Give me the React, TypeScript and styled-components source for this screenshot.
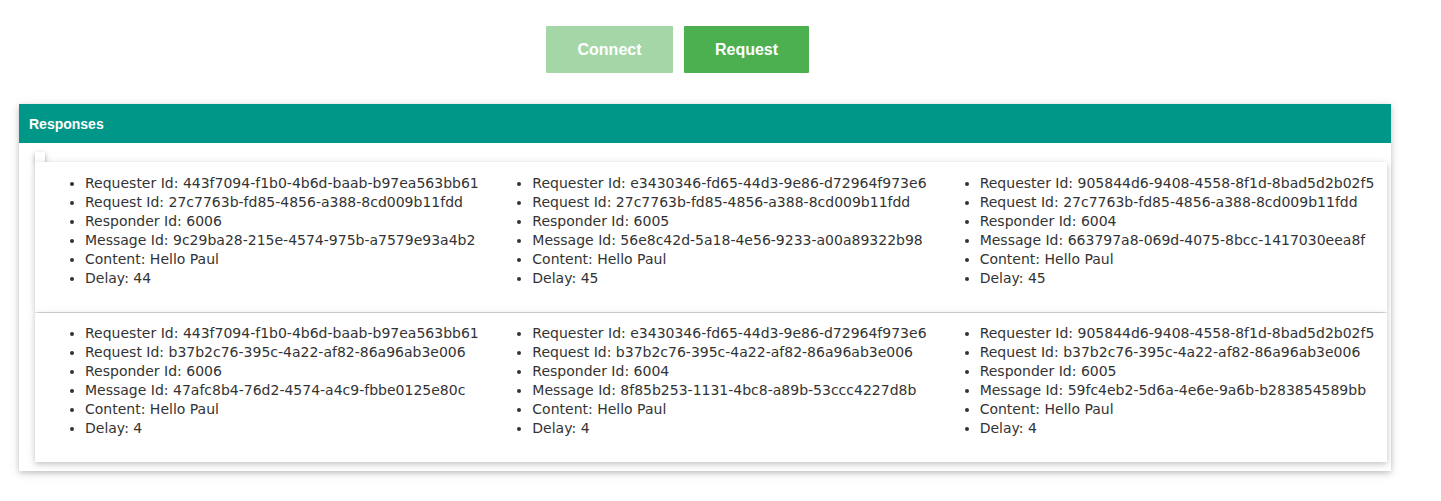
import React from "react";
import styled, { createGlobalStyle } from "styled-components";

const Global = createGlobalStyle`
  html, body { margin: 0; padding: 0; background: #fff; }
  body { font-family: "DejaVu Sans", Verdana, sans-serif; }
`;

const Page = styled.div`
  padding: 26px 50px 20px 19px;
  width: 1372px;
`;

const Toolbar = styled.div`
  display: flex;
  justify-content: center;
  gap: 11px;
  margin-right: 55px;
  margin-bottom: 31px;
`;

const Button = styled.button<{ $faded?: boolean }>`
  height: 47px;
  padding: 1px 0 0;
  width: ${(p) => (p.$faded ? 127 : 125)}px;
  border: none;
  border-radius: 1px;
  background: ${(p) => (p.$faded ? "#a5d6a7" : "#4caf50")};
  color: #fff;
  font-family: "Liberation Sans", Arial, sans-serif;
  font-weight: bold;
  font-size: 16px;
  cursor: pointer;
`;

const Panel = styled.section`
  background: #fff;
  box-shadow: 0 2px 5px rgba(0, 0, 0, 0.16), 0 2px 10px rgba(0, 0, 0, 0.12);
`;

const PanelHeader = styled.div`
  background: #009688;
  color: #fff;
  height: 39px;
  display: flex;
  align-items: center;
  padding-left: 10px;
  font-family: "Liberation Sans", Arial, sans-serif;
  font-weight: bold;
  font-size: 14px;
`;

const PanelBody = styled.div`
  padding: 9px 4px 9px 16px;
`;

const Stub = styled.div`
  width: 10px;
  height: 10px;
  background: #fff;
  box-shadow: 0 2px 4px rgba(0, 0, 0, 0.28), 0 2px 10px rgba(0, 0, 0, 0.12);
`;

const Card = styled.div`
  display: grid;
  grid-template-columns: repeat(3, 1fr);
  padding: 12px 0 24px 10px;
  background: #fff;
  box-shadow: 0 2px 5px rgba(0, 0, 0, 0.16), 0 2px 10px rgba(0, 0, 0, 0.1);
  & + & {
    margin-top: 1px;
    padding-top: 11px;
  }
`;

const List = styled.ul`
  margin: 0;
  padding-left: 40px;
  color: #333;
  font-size: 14px;
  line-height: 19px;
  white-space: nowrap;
`;

type Resp = {
  requester: string;
  request: string;
  responder: string;
  message: string;
  content: string;
  delay: string;
};

const rows: Resp[][] = [
  [
    { requester: "443f7094-f1b0-4b6d-baab-b97ea563bb61", request: "27c7763b-fd85-4856-a388-8cd009b11fdd", responder: "6006", message: "9c29ba28-215e-4574-975b-a7579e93a4b2", content: "Hello Paul", delay: "44" },
    { requester: "e3430346-fd65-44d3-9e86-d72964f973e6", request: "27c7763b-fd85-4856-a388-8cd009b11fdd", responder: "6005", message: "56e8c42d-5a18-4e56-9233-a00a89322b98", content: "Hello Paul", delay: "45" },
    { requester: "905844d6-9408-4558-8f1d-8bad5d2b02f5", request: "27c7763b-fd85-4856-a388-8cd009b11fdd", responder: "6004", message: "663797a8-069d-4075-8bcc-1417030eea8f", content: "Hello Paul", delay: "45" },
  ],
  [
    { requester: "443f7094-f1b0-4b6d-baab-b97ea563bb61", request: "b37b2c76-395c-4a22-af82-86a96ab3e006", responder: "6006", message: "47afc8b4-76d2-4574-a4c9-fbbe0125e80c", content: "Hello Paul", delay: "4" },
    { requester: "e3430346-fd65-44d3-9e86-d72964f973e6", request: "b37b2c76-395c-4a22-af82-86a96ab3e006", responder: "6004", message: "8f85b253-1131-4bc8-a89b-53ccc4227d8b", content: "Hello Paul", delay: "4" },
    { requester: "905844d6-9408-4558-8f1d-8bad5d2b02f5", request: "b37b2c76-395c-4a22-af82-86a96ab3e006", responder: "6005", message: "59fc4eb2-5d6a-4e6e-9a6b-b283854589bb", content: "Hello Paul", delay: "4" },
  ],
];

export default function App() {
  return (
    <>
      <Global />
      <Page>
        <Toolbar>
          <Button $faded>Connect</Button>
          <Button>Request</Button>
        </Toolbar>
        <Panel>
          <PanelHeader>Responses</PanelHeader>
          <PanelBody>
            <Stub />
            {rows.map((row, i) => (
              <Card key={i}>
                {row.map((r, j) => (
                  <List key={j}>
                    <li>Requester Id: {r.requester}</li>
                    <li>Request Id: {r.request}</li>
                    <li>Responder Id: {r.responder}</li>
                    <li>Message Id: {r.message}</li>
                    <li>Content: {r.content}</li>
                    <li>Delay: {r.delay}</li>
                  </List>
                ))}
              </Card>
            ))}
          </PanelBody>
        </Panel>
      </Page>
    </>
  );
}
